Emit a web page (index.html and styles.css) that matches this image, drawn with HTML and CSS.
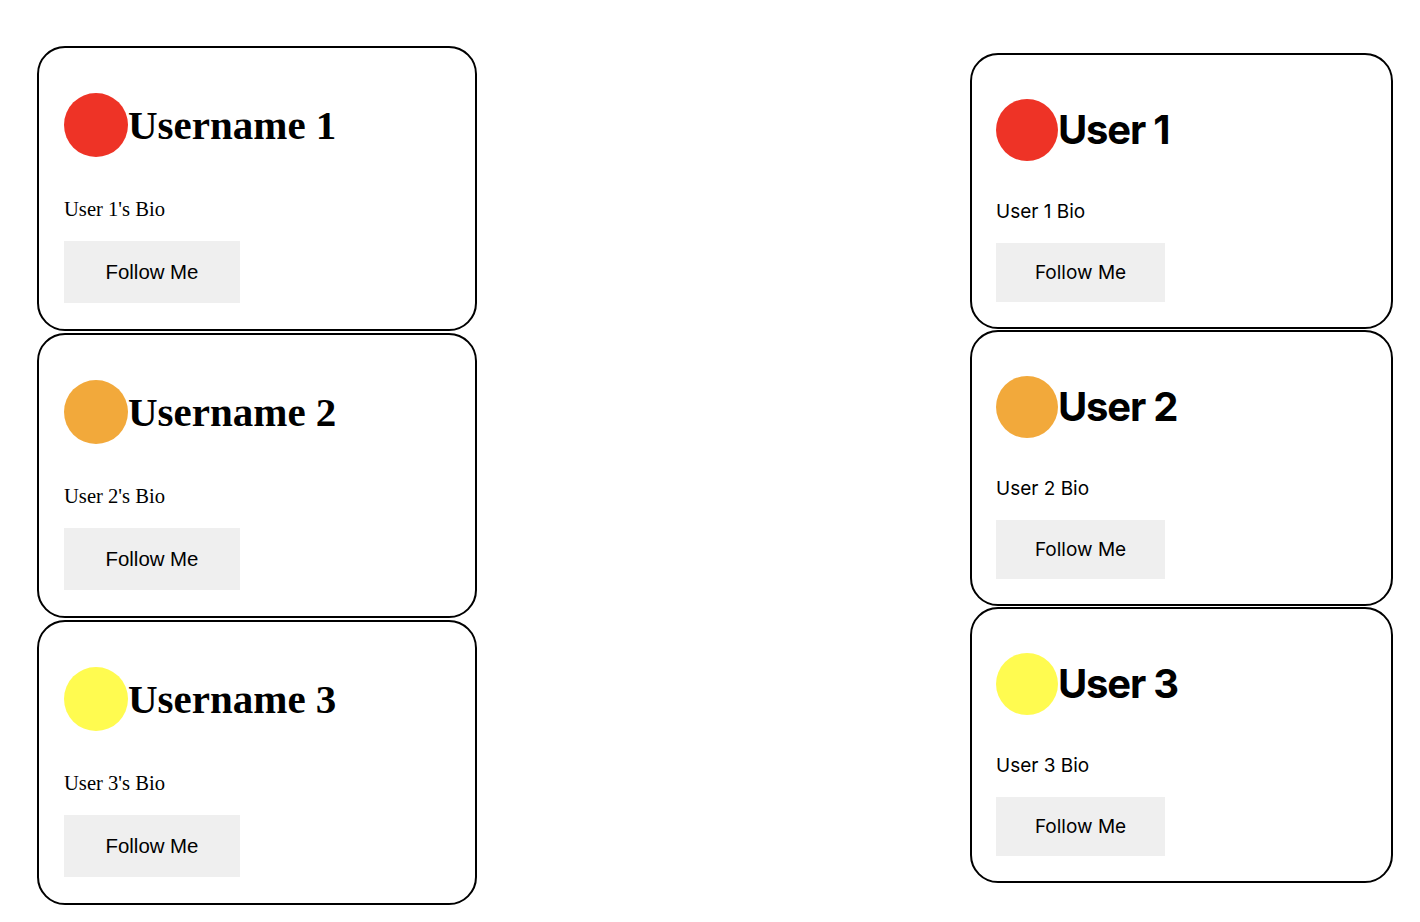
FILE: index.html
```html
<!DOCTYPE html>
<html>
<head>
<meta charset="utf-8">
<link rel="stylesheet" href="styles.css">
</head>
<body>
<div class="page">
  <div class="col col-left">
    <div class="card card-l">
      <div class="head"><span class="avatar red"></span><h2 class="name">Username 1</h2></div>
      <p class="bio">User 1's Bio</p>
      <button class="follow">Follow Me</button>
    </div>
    <div class="card card-l">
      <div class="head"><span class="avatar orange"></span><h2 class="name">Username 2</h2></div>
      <p class="bio">User 2's Bio</p>
      <button class="follow">Follow Me</button>
    </div>
    <div class="card card-l">
      <div class="head"><span class="avatar yellow"></span><h2 class="name">Username 3</h2></div>
      <p class="bio">User 3's Bio</p>
      <button class="follow">Follow Me</button>
    </div>
  </div>
  <div class="col col-right">
    <div class="card card-r">
      <div class="head"><span class="avatar red"></span><h2 class="name">User 1</h2></div>
      <p class="bio">User 1 Bio</p>
      <button class="follow">Follow Me</button>
    </div>
    <div class="card card-r">
      <div class="head"><span class="avatar orange"></span><h2 class="name">User 2</h2></div>
      <p class="bio">User 2 Bio</p>
      <button class="follow">Follow Me</button>
    </div>
    <div class="card card-r">
      <div class="head"><span class="avatar yellow"></span><h2 class="name">User 3</h2></div>
      <p class="bio">User 3 Bio</p>
      <button class="follow">Follow Me</button>
    </div>
  </div>
</div>
</body>
</html>
```

FILE: styles.css
```css
html, body {
  background: #ffffff;
}
body {
  margin: 8px;
}
.page {
  display: flex;
  justify-content: space-between;
  align-items: flex-start;
  padding: 0 19px 0 29px;
}
.col {
  display: flex;
  flex-direction: column;
}
.col-left {
  margin-top: 38px;
  gap: 2px;
  width: 440px;
}
.col-right {
  margin-top: 45px;
  gap: 1px;
  width: 423px;
}
.card {
  box-sizing: border-box;
  border: 2px solid #000;
  border-radius: 28px;
  background: #fff;
  display: flex;
  flex-direction: column;
  align-items: flex-start;
}
.head {
  display: flex;
  align-items: center;
}
.avatar {
  display: block;
  border-radius: 50%;
  flex: none;
}
.red { background: #ee3326; }
.orange { background: #f2a93b; }
.yellow { background: #fffb50; }
.name {
  margin: 0;
  font-weight: bold;
  color: #000;
}
.bio {
  margin: 0;
  color: #000;
}
.follow {
  border: none;
  background: #efefef;
  color: #000;
  cursor: pointer;
  padding: 0;
}

/* left column: serif variant */
.card-l {
  height: 285px;
  padding: 0 25px;
}
.card-l .head {
  margin-top: 45px;
  height: 64px;
}
.card-l .avatar {
  width: 64px;
  height: 64px;
}
.card-l .name {
  font-family: "Liberation Serif", "Times New Roman", serif;
  font-size: 41px;
  line-height: 46px;
}
.card-l .bio {
  font-family: "Liberation Serif", "Times New Roman", serif;
  font-size: 20.6px;
  line-height: 23px;
  margin-top: 41px;
}
.card-l .follow {
  margin-top: 20px;
  width: 176px;
  height: 62px;
  font-family: "Liberation Sans", Arial, sans-serif;
  font-size: 20.4px;
}

/* right column: sans variant */
.card-r {
  height: 276px;
  padding: 0 24px;
}
.card-r .head {
  margin-top: 44px;
  height: 62px;
}
.card-r .avatar {
  width: 62px;
  height: 62px;
}
.card-r .name {
  font-family: Inter, "Liberation Sans", sans-serif;
  font-size: 40px;
  line-height: 48px;
  letter-spacing: -1.2px;
}
.card-r .bio {
  font-family: Inter, "Liberation Sans", sans-serif;
  font-size: 19px;
  line-height: 22px;
  margin-top: 40px;
}
.card-r .follow {
  margin-top: 20px;
  width: 169px;
  height: 59px;
  font-family: Inter, "Liberation Sans", sans-serif;
  font-size: 19px;
}
```
